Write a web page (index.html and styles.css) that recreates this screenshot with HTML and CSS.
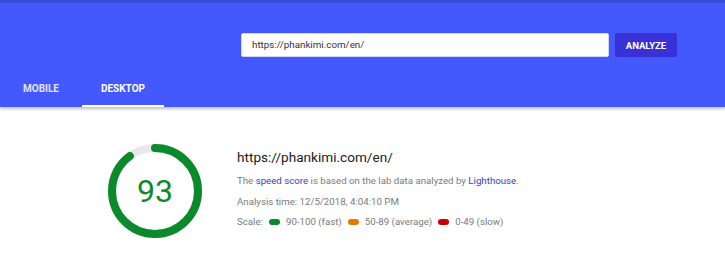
FILE: index.html
```html
<!DOCTYPE html>
<html>
<head>
<meta charset="utf-8">
<link rel="stylesheet" href="styles.css">
</head>
<body>
<header class="header">
  <div class="search-row">
    <div class="url-input">https://phankimi.com/en/</div>
    <button class="analyze">ANALYZE</button>
  </div>
  <nav class="tabs">
    <div class="tab">MOBILE</div>
    <div class="tab active">DESKTOP</div>
  </nav>
</header>
<main class="result">
  <div class="gauge">
    <svg width="96" height="96" viewBox="0 0 96 96">
      <circle cx="48" cy="48" r="43" fill="none" stroke="#e8e8e8" stroke-width="8"/>
      <circle cx="48" cy="48" r="43" fill="none" stroke="#0b8a2c" stroke-width="8" stroke-linecap="round" stroke-dasharray="243 270.2" transform="rotate(-90 48 48)"/>
    </svg>
    <span class="score">93</span>
  </div>
  <div class="info">
    <div class="site">https://phankimi.com/en/</div>
    <p class="line">The <a class="link">speed score</a> is based on the lab data analyzed by <a class="link">Lighthouse</a>.</p>
    <p class="line">Analysis time: 12/5/2018, 4:04:10 PM</p>
    <p class="line scale"><span>Scale:</span><span class="pill fast"></span><span>90-100 (fast)</span><span class="pill avg"></span><span>50-89 (average)</span><span class="pill slow"></span><span>0-49 (slow)</span></p>
  </div>
</main>
</body>
</html>
```
FILE: styles.css
```css
* { box-sizing: border-box; }
body {
  margin: 0;
  background: #fff;
  font-family: Roboto, "Liberation Sans", sans-serif;
}
.header {
  background: #4359fd;
  height: 107px;
  border-top: 3px solid #3a4bd6;
  box-shadow: 0 2px 3px rgba(0,0,0,0.25);
  display: flex;
  flex-direction: column;
}
.search-row {
  display: flex;
  padding: 30px 0 0 241px;
  gap: 6px;
}
.url-input {
  width: 368px;
  height: 24px;
  background: #fff;
  border: 1px solid #cfd4f5;
  border-radius: 2px;
  font-size: 9.8px;
  color: #333;
  padding: 0 10px;
  line-height: 22px;
}
.analyze {
  width: 62px;
  height: 24px;
  background: #3a30d8;
  border: none;
  border-radius: 2px;
  color: #fff;
  font-family: Roboto, "Liberation Sans", sans-serif;
  font-weight: 700;
  font-size: 9.5px;
  padding: 0;
}
.tabs {
  display: flex;
  margin-top: auto;
}
.tab {
  width: 82px;
  height: 32px;
  text-align: center;
  font-size: 10px;
  font-weight: 700;
  color: #e2e4fb;
  line-height: 28px;
  border-bottom: 2px solid transparent;
}
.tab.active {
  color: #fff;
  border-bottom-color: #fff;
}
.result {
  display: flex;
  padding: 36px 0 0 107px;
  gap: 34px;
}
.gauge {
  position: relative;
  width: 96px;
  height: 96px;
}
.gauge svg { display: block; }
.score {
  position: absolute;
  inset: 0;
  display: flex;
  align-items: center;
  justify-content: center;
  font-size: 32px;
  color: #0b8a2c;
}
.info { padding-top: 6px; }
.site {
  font-size: 13.6px;
  line-height: 16px;
  color: #212121;
  margin-bottom: 6px;
}
.line {
  margin: 0;
  font-size: 9.7px;
  color: #7a7a7a;
  line-height: 20.5px;
}
.scale {
  display: flex;
  align-items: center;
}
.link { color: #3b3cc9; }
.pill {
  display: inline-block;
  width: 11px;
  height: 6px;
  border-radius: 3px;
  margin: 0 6px;
}
.fast { background: #0b8a2c; }
.avg { background: #e67700; }
.slow { background: #cc0000; }
```
